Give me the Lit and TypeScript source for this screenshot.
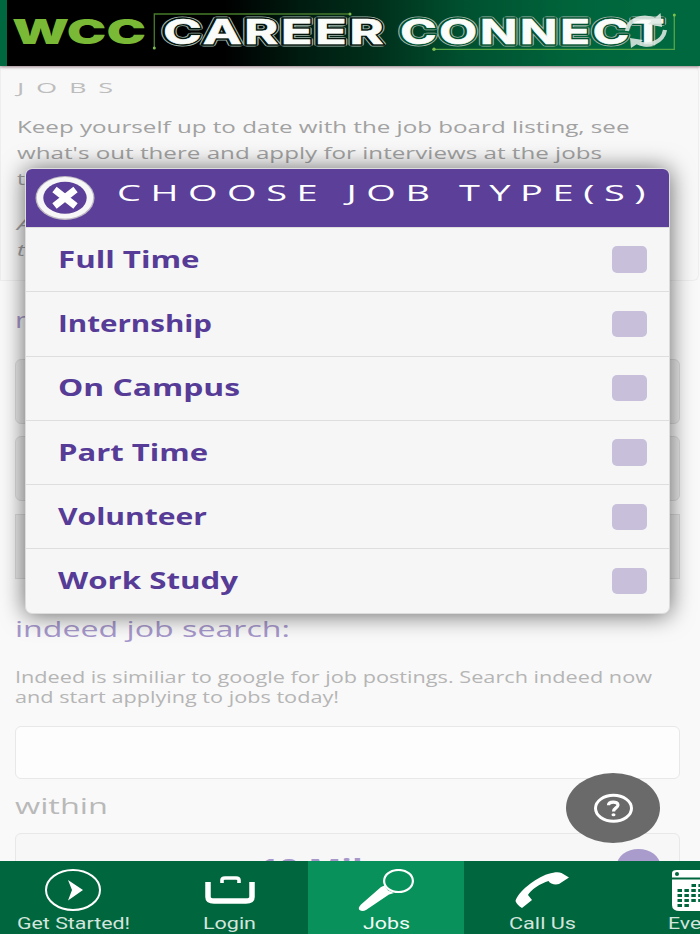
import { LitElement, html, svg, css } from "lit";
import { customElement, property } from "lit/decorators.js";

/** One line of wide-set text, drawn to an exact width. */
@customElement("wide-text")
export class WideText extends LitElement {
  @property() text = "";
  @property({ type: Number }) width = 100;
  @property({ type: Number }) size = 16;
  @property({ type: Number }) line = 24;
  @property({ type: Number }) base = 18;
  @property({ type: Number }) spacing = 0;
  static styles = css`
    :host { display: block; font-family: "Open Sans", "Noto Sans", sans-serif; }
    svg { display: block; overflow: visible; }
    text { fill: currentColor; white-space: pre; }
  `;
  render() {
    return html`<svg width=${this.width} height=${this.line}>
      ${svg`<text x="0" y=${this.base} font-size=${this.size} letter-spacing=${this.spacing}
        textLength=${this.width} lengthAdjust="spacingAndGlyphs">${this.text}</text>`}
    </svg>`;
  }
}

@customElement("brand-header")
export class BrandHeader extends LitElement {
  static styles = css`
    :host { display: block; height: 66px; position: relative; z-index: 2;
      background: linear-gradient(90deg, #00683e 0 7px, #000 7px 225px, #001b10 300px, #002f1b 375px, #00512f 465px, #00643b 570px, #00683e 640px);
      box-shadow: 0 1px 3px rgba(60, 20, 30, .55); }
    svg { display: block; }
    text { font-family: "Inter", "Open Sans", sans-serif; font-weight: 800; font-size: 34.5px; }
    .wcc { fill: #79b935; font-weight: 900; }
    .word text { letter-spacing: 1.6px; font-weight: 700; }
    .outer { fill: none; stroke: #9fb1a8; stroke-width: 5; stroke-linejoin: round; }
    .inner { fill: #03140c; stroke: #03140c; stroke-width: 3.4; }
    .inner.green { fill: #00522f; stroke: #00522f; }
    .face { fill: #fafcfa; stroke: #fafcfa; stroke-width: .6; }
    .rule { fill: none; stroke: #467b2c; stroke-width: 1.3; }
    .rule.bright { stroke: #55a548; }
    .dot { fill: #7fbf4d; }
    .refresh { fill: none; stroke: #dfe9e4; stroke-width: 4.2; }
    .tip { fill: #dfe9e4; }
    .icon { opacity: .88; }
  `;
  private word(t: string, x: number, w: number, tone: string) {
    const line = (cls: string, dx: number, dy: number) => svg`<text class=${cls} x=${x + dx} y=${43.7 + dy}
      textLength=${w} lengthAdjust="spacingAndGlyphs">${t}</text>`;
    return svg`<g class="word">${line("outer", -0.5, 0.2)}${line("inner " + tone, -0.5, 0.2)}${line("face", 0, 0)}</g>`;
  }
  render() {
    return html`<svg width="700" height="66" viewBox="0 0 700 66">
      <path class="rule" d="M154.3 48V14H350" />
      <path class="rule bright" d="M433 49.3H674.3V15" />
      <circle class="dot" cx="154.3" cy="48" r="1.5" /><circle class="dot" cx="350" cy="14" r="1.5" />
      <circle class="dot" cx="434" cy="49.3" r="1.7" /><circle class="dot" cx="674.3" cy="15" r="1.5" />
      <text class="wcc" x="12" y="43.7" textLength="134" lengthAdjust="spacingAndGlyphs">WCC</text>
      ${this.word("CAREER", 163, 223, "")}
      ${this.word("CONNECT", 400, 267, "green")}
      <g class="icon">
        <path class="refresh" d="M627 31C628 20 642 14 656 20M665 30C663 42 648 49 635 41" />
        <path class="tip" d="M660.5 13L662 27L648 24ZM630 38L643 40L631 48Z" />
      </g>
    </svg>`;
  }
}

interface JobType { name: string; width: number; }
const JOB_TYPES: JobType[] = [
  { name: "Full Time", width: 141.5 },
  { name: "Internship", width: 154 },
  { name: "On Campus", width: 182 },
  { name: "Part Time", width: 150 },
  { name: "Volunteer", width: 149 },
  { name: "Work Study", width: 180 },
];

@customElement("job-type-dialog")
export class JobTypeDialog extends LitElement {
  static styles = css`
    :host { display: block; box-sizing: border-box; border: 1.5px solid #dcdcdc; border-radius: 7px;
      background: #f6f6f6; overflow: hidden; box-shadow: 0 1px 23px 0 rgba(0, 0, 0, .6); }
    .head { height: 58px; display: flex; align-items: flex-start; background: #5b3f98; color: #fff; }
    .close { display: block; margin: 6px 0 0 9px; flex: none; }
    .title { margin: 8px 0 0 22px; }
    .row { box-sizing: border-box; height: 64.3px; padding: 0 22.5px 0 32px; display: flex;
      align-items: center; justify-content: space-between; border-top: 1.5px solid #dedede;
      color: #563b97; font-weight: 700; }
    .box { width: 35px; height: 26.5px; border-radius: 5px; background: #c8bfdb; }
  `;
  render() {
    return html`
      <div class="head">
        <svg class="close" width="60" height="46" viewBox="0 0 60 46">
          <ellipse cx="30" cy="23" rx="29.5" ry="22" fill="#bdb8c4" />
          <ellipse cx="30" cy="22.8" rx="28.2" ry="20.8" fill="#f7f7f7" />
          <ellipse cx="30" cy="22.8" rx="21.7" ry="16" fill="#5b3f98" />
          <path d="M19.5 14.5L40.500 31M40.500 14.5L19.5 31" stroke="#fff" stroke-width="7" />
        </svg>
        <wide-text class="title" text="CHOOSE JOB TYPE(S)" width="538" size="22.3" line="34" base="24.2" spacing="5.6"></wide-text>
      </div>
      ${JOB_TYPES.map((j) => html`<div class="row">
        <wide-text text=${j.name} width=${j.width} size="24" line="30" base="22.8"></wide-text>
        <span class="box"></span>
      </div>`)}`;
  }
}

const ICONS = {
  start: svg`<ellipse cx="30" cy="21" rx="27" ry="20" fill="none" stroke="#fff" stroke-width="2"/><path d="M25 11L40 21L25 31.500L29 21Z" fill="#fff"/>`,
  login: svg`<path d="M8 13V28Q8 32 14 32H46Q52 32 52 28V13" fill="none" stroke="#fff" stroke-width="5.500"/><path d="M22 14V11Q22 9 25 9H36Q39 9 39 11V14" fill="none" stroke="#fff" stroke-width="3.600"/>`,
  jobs: svg`<ellipse cx="42.500" cy="12" rx="14.400" ry="11" fill="none" stroke="#fff" stroke-width="2.2"/><path d="M28.500 16.500L32 21.500L38 24L33 25.500L10 41Q6.500 43 3.500 41Q1.500 39 5 35.500L25 18Z" fill="#fff"/>`,
  call: svg`<path d="M2.500 32C5 23 22 9 35 5C42 2.800 46 3 48.500 4L56 8.500L46 15C42 16 37 15 35.500 12C28 14 17 21.500 15 26L19 31L9 39Q4 36 2.500 32Z" fill="#fff"/>`,
  events: svg`<path d="M3 8.500V4Q3 1 8 1H56V8.500ZM3 10.500H56V42H11Q3 42 3 36Z" fill="#fff"/><circle cx="8" cy="5" r="2" fill="#00663d"/><path d="M22.500 16.500H56M8.500 21.500H56M8.500 26.500H56M8.500 31.500H56M8.500 36.500H21" stroke="#00663d" stroke-width="3" stroke-dasharray="4.500 2.400"/>`,
};
const TABS = [
  { icon: ICONS.start, label: "Get Started!", width: 113, active: false },
  { icon: ICONS.login, label: "Login", width: 53, active: false },
  { icon: ICONS.jobs, label: "Jobs", width: 47, active: true },
  { icon: ICONS.call, label: "Call Us", width: 67, active: false },
  { icon: ICONS.events, label: "Events", width: 63, active: false },
];

@customElement("tab-bar")
export class TabBar extends LitElement {
  static styles = css`
    :host { display: flex; height: 73px; background: #00663d; overflow: hidden; position: relative; z-index: 2; }
    .tab { flex: 0 0 156.5px; display: flex; flex-direction: column; align-items: center; color: #d3e5dc; }
    .tab:first-child { margin-left: -5.2px; }
    .active { background: #08915a; color: #f2fbf6; }
    svg { display: block; margin-top: 8px; flex: none; }
    wide-text { font-family: "Roboto", sans-serif; }
  `;
  render() {
    return html`${TABS.map((t) => html`<div class="tab ${t.active ? "active" : ""}">
      <svg width="60" height="43" viewBox="0 0 60 43">${t.icon}</svg>
      <wide-text text=${t.label} width=${t.width} size="16.4" line="20" base="17.2"></wide-text>
    </div>`)}`;
  }
}

@customElement("app-root")
export class AppRoot extends LitElement {
  static styles = css`
    :host { display: flex; flex-direction: column; position: relative; width: 700px; height: 934px;
      overflow: hidden; background: #f9f9f9; }
    main { flex: 1; min-height: 0; overflow: hidden; }
    .intro { box-sizing: border-box; width: 699px; height: 215px; padding: 0 16px; background: #f8f8f8;
      border: 1px solid #eee; border-top: 0; border-radius: 0 6px 6px 0; color: #a2a2a2; }
    .jobs { color: #bdbdbd; padding-top: 6px; }
    .lead { padding-top: 17px; }
    .note { padding-top: 18px; font-style: italic; }
    .body { padding: 0 20px 0 15px; }
    .purple { color: #a697cb; }
    .first { padding-top: 25px; height: 53px; box-sizing: content-box; }
    .field { box-sizing: border-box; height: 65px; margin-bottom: 12.3px; border: 1.5px solid #dcdcdc;
      border-radius: 6px; background: #ebebeb; }
    .field.square { border-radius: 0; margin-bottom: 36px; }
    .small { color: #b5b5b5; margin-top: 22px; }
    .input { box-sizing: border-box; height: 53.5px; margin-top: 19px; border: 1.5px solid #e8e8e8;
      border-radius: 6px; background: #fdfdfd; }
    .within { color: #b9b9b9; padding-top: 10.5px; }
    .select { box-sizing: border-box; height: 64px; margin-top: 9.5px; border: 1.5px solid #e8e8e8;
      border-radius: 6px; background: #f7f7f7; display: flex; align-items: flex-start;
      justify-content: space-between; padding: 15px 19px 0 243px; color: #a697cb; font-weight: 700; }
    .select wide-text { padding-top: 1.5px; }
    .knob { width: 43px; height: 32px; border-radius: 50%; background: #a99bcb; }
    job-type-dialog { position: absolute; left: 25px; top: 168px; width: 645px; height: 446px; }
    .help { position: absolute; left: 566px; top: 773px; z-index: 3; }
  `;
  render() {
    return html`
      <brand-header></brand-header>
      <main>
        <section class="intro">
          <wide-text class="jobs" text="JOBS" width="108" size="15" line="27" base="20.8" spacing="6.5"></wide-text>
          <div class="lead">
            <wide-text text="Keep yourself up to date with the job board listing, see" width="612.5" size="17" line="26.3" base="16.7"></wide-text>
            <wide-text text="what's out there and apply for interviews at the jobs" width="585" size="17" line="26.3" base="16.7"></wide-text>
            <wide-text text="t" width="8" size="17" line="26.3" base="16.2"></wide-text>
          </div>
          <div class="note">
            <wide-text text="A" width="15" size="17" line="26" base="16.5"></wide-text>
            <wide-text text="t" width="8" size="17" line="26" base="16.5"></wide-text>
          </div>
        </section>
        <section class="body">
          <div class="first purple"><wide-text text="n" width="18" size="22.5" line="30" base="21.5"></wide-text></div>
          <div class="field"></div>
          <div class="field"></div>
          <div class="field square"></div>
          <wide-text class="purple" text="indeed job search:" width="275" size="22.5" line="30" base="22"></wide-text>
          <div class="small">
            <wide-text text="Indeed is similiar to google for job postings. Search indeed now" width="637" size="15.5" line="20" base="16"></wide-text>
            <wide-text text="and start applying to jobs today!" width="324" size="15.5" line="20" base="16"></wide-text>
          </div>
          <div class="input"></div>
          <wide-text class="within" text="within" width="93" size="22.5" line="34" base="24"></wide-text>
          <div class="select">
            <wide-text text="10 Miles" width="142" size="24" line="40" base="24.5"></wide-text>
            <span class="knob"></span>
          </div>
        </section>
      </main>
      <tab-bar></tab-bar>
      <job-type-dialog></job-type-dialog>
      <svg class="help" width="94" height="70" viewBox="0 0 94 70">
        <ellipse cx="47" cy="35" rx="47" ry="35" fill="#6a6a6a" />
        <ellipse cx="47.5" cy="35.300" rx="18" ry="13" fill="none" stroke="#fff" stroke-width="3" />
        <path d="M42.500 32.300C42.500 28 52 28 52 32C52 34.800 47.500 35 47.500 38.500" fill="none" stroke="#fff" stroke-width="3.2" />
        <ellipse cx="47.500" cy="41.800" rx="2" ry="1.500" fill="#fff" />
      </svg>`;
  }
}
